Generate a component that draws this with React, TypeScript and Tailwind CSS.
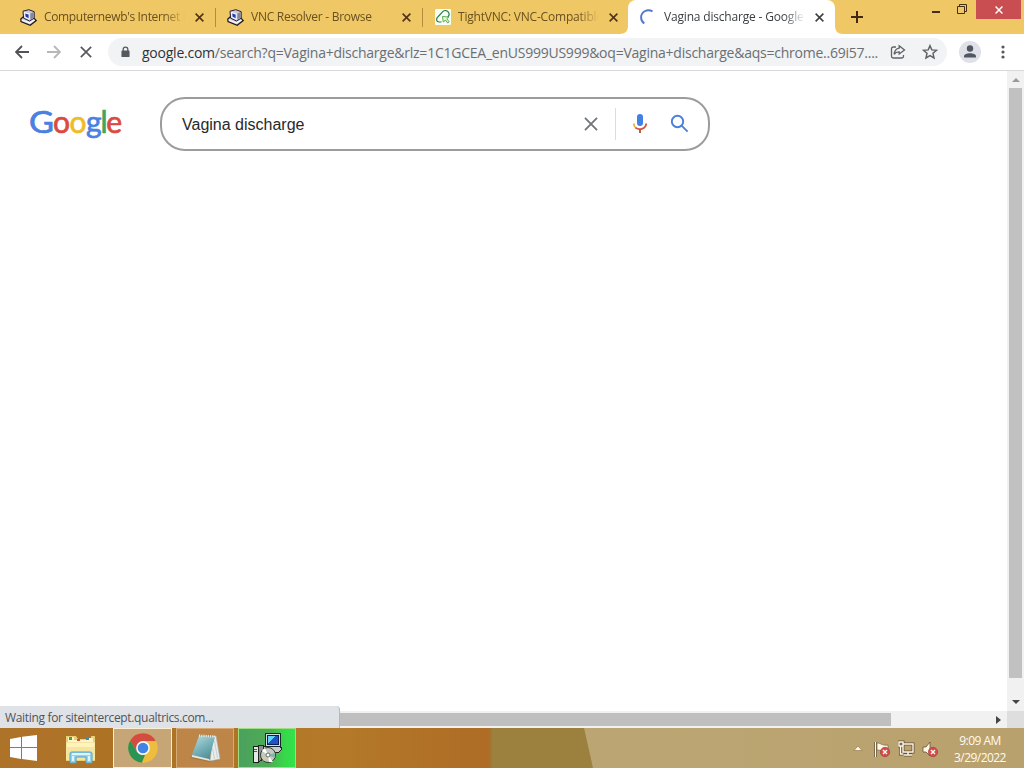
import type { ReactNode } from "react";

const UI_FONT = "font-['Open_Sans','Noto_Sans',sans-serif]";

function Cross({ className = "", size = 9, stroke = 1.7 }: { className?: string; size?: number; stroke?: number }) {
  return (
    <svg className={`shrink-0 ${className}`} width={size} height={size} viewBox="0 0 10 10" fill="none" stroke="currentColor" strokeWidth={stroke}>
      <path d="M.7.7l8.6 8.6M9.3.7L.7 9.3" />
    </svg>
  );
}

function VncIcon() {
  return (
    <svg width="17" height="17" viewBox="0 0 17 17" className="shrink-0">
      <path d="M.8 10l3-2.5 10 1.5 2.4 2.5-6 4.7L1 12.5z" fill="#d9d7dc" stroke="#1d1720" strokeWidth="1.2" />
      <path d="M2 11.2l7.5 2.6 5-2.8" fill="none" stroke="#f8f8fa" strokeWidth="1.2" />
      <path d="M3 2.2L8.8.7l5.4 2v6.5L9.5 12 3.6 9.2z" fill="#c9c8d3" stroke="#241e32" />
      <path d="M3.8 2.8l5.8 1.6v6.4L4.4 8.6z" fill="#f6f5fa" />
      <path d="M5.2 4.4l3.4 1v3.8L5.6 7.8z" fill="#2439b5" />
      <path d="M10.4 4.6l3-1.4v5.4l-3 2z" fill="#86849c" />
    </svg>
  );
}

function TightIcon() {
  return (
    <svg width="16" height="16" viewBox="0 0 16 16" className="shrink-0">
      <rect width="16" height="16" rx="1" fill="#f8fff5" />
      <path d="M6.5 13H4.2C1 13 .9 9.6 3 7.7l4.8-5c2-2 4.6-1.2 5.7.6 1.3 2.2.4 3.8-1 5" fill="none" stroke="#257d4e" strokeWidth="1.2" />
      <path d="M7.5 7.5l6 .6-1.6 1.7 2.2 3-1.4 1.2-2.2-3-2.2 2z" fill="#e9ffe0" stroke="#55ab49" />
    </svg>
  );
}

function Tab({ icon, title, active, className, titleClass }: { icon: ReactNode; title: string; active?: boolean; className: string; titleClass: string }) {
  return (
    <div className={`relative flex h-[34px] shrink-0 items-center ${className} ${active ? "rounded-t-lg bg-white text-[#3c4043]" : "text-[#69501f]"}`}>
      {icon}
      <div className={`ml-[7px] w-[141px] overflow-hidden whitespace-nowrap text-[12px] leading-[18px] [mask-image:linear-gradient(to_right,black_85%,transparent)] ${titleClass}`}>
        {title}
      </div>
      <Cross className={`ml-[10px] ${active ? "text-[#3c4043]" : "text-[#513017]"}`} />
    </div>
  );
}

function BrowserTabs() {
  return (
    <div className="flex h-[34px] items-start bg-[#efc765]">
      <Tab className="w-[215px] pl-[20px]" icon={<VncIcon />} title="Computernewb's Internet Ro" titleClass="tracking-[-0.34px]" />
      <div className="mt-2 h-[19px] w-px bg-[#b58b3d]" />
      <Tab className="w-[206px] pl-[11px]" icon={<VncIcon />} title="VNC Resolver - Browse" titleClass="tracking-[-0.27px]" />
      <div className="mt-2 h-[19px] w-px bg-[#b58b3d]" />
      <Tab className="w-[205px] pl-[12px]" icon={<TightIcon />} title="TightVNC: VNC-Compatible" titleClass="tracking-[-0.2px]" />
      <div className="relative h-[34px]">
        <Tab
          active
          className="w-[207px] pl-[12px]"
          icon={
            <svg width="17" height="17" viewBox="0 0 17 17" className="shrink-0" fill="none">
              <path d="M12.5 2.4C7-.8 1 3.1 1.1 8.5c0 2.6 1.3 4.7 3.2 6" stroke="#5278cd" strokeWidth="1.9" />
            </svg>
          }
          title="Vagina discharge - Google Search"
          titleClass="tracking-[-0.18px]"
        />
        <svg className="absolute -left-2 bottom-0" width="8" height="8"><path d="M8 0v8H0c5 0 8-3 8-8z" fill="white" /></svg>
        <svg className="absolute -right-2 bottom-0" width="8" height="8"><path d="M0 0v8h8C3 8 0 5 0 0z" fill="white" /></svg>
      </div>
      <svg className="ml-[16px] mt-[11px]" width="12" height="12" viewBox="0 0 12 12" stroke="#3f2b13" strokeWidth="2"><path d="M6 0v12M0 6h12" /></svg>
      <div className="ml-auto flex pr-[3px]">
        <div className="mr-[17px] mt-[11px] h-[2px] w-[8px] bg-[#453016]" />
        <svg className="mr-[9px] mt-[4px]" width="10" height="10" viewBox="0 0 10 10" fill="none" stroke="#453016">
          <path d="M.5 2.5h7v7h-7zM2.5 2V.5h7v7H8" />
        </svg>
        <div className="flex h-[19px] w-[45px] items-center justify-center bg-[#c94e52] text-white"><Cross size={8} stroke={1.8} /></div>
      </div>
    </div>
  );
}

function Toolbar() {
  return (
    <div className="flex h-[37px] items-center border-b border-[#d9d9dc] bg-white pl-[15px] text-[#5f6368]">
      <svg width="14" height="14" viewBox="0 0 14 14" fill="none" stroke="#505357" strokeWidth="1.8"><path d="M14 7H1.5M7 1L1 7l6 6" /></svg>
      <svg className="ml-[18px]" width="14" height="14" viewBox="0 0 14 14" fill="none" stroke="#b6b7b9" strokeWidth="1.8"><path d="M0 7h12.5M7 1l6 6-6 6" /></svg>
      <Cross className="ml-[19px] text-[#55585c]" size={12} stroke={1.4} />
      <div className="ml-[16px] flex h-[28px] w-[839px] items-center rounded-full bg-[#f1f3f4] pl-[13px]">
        <svg width="9" height="12" viewBox="0 0 10 12"><path d="M2.4 5V3.2a2.6 2.6 0 015.2 0V5" fill="none" stroke="#555a5e" strokeWidth="1.4" /><rect x=".5" y="4.4" width="9" height="7.2" rx="1" fill="#555a5e" /></svg>
        <div className="ml-[12px] w-[740px] whitespace-nowrap pt-px text-[14px] leading-5 tracking-[-0.24px] text-[#6b6f73]">
          <span className="text-[#303336]">google.com</span>/search?q=Vagina+discharge&amp;rlz=1C1GCEA_enUS999US999&amp;oq=Vagina+discharge&amp;aqs=chrome..69i57....
        </div>
        <svg className="ml-[8px] shrink-0" width="16" height="16" viewBox="0 0 16 16" fill="none" stroke="currentColor" strokeWidth="1.3">
          <path d="M6 3H3.2A1.7 1.7 0 001.5 4.7v7.6A1.7 1.7 0 003.2 14h8.6a1.7 1.7 0 001.7-1.7V11" />
          <path d="M9.2 1.8L14.5 6 9.2 10V7.9C7 7.8 5.3 8.6 4.2 10.4c.2-3.5 2-5.8 5-6.3z" />
        </svg>
        <svg className="ml-[16px] shrink-0" width="16" height="16" viewBox="0 0 16 16" fill="none" stroke="currentColor" strokeWidth="1.5"><path d="M8 1.7l1.8 4.2 4.7.4-3.5 3 1 4.6L8 11.5l-4 2.4 1-4.6-3.5-3 4.7-.4z" /></svg>
      </div>
      <svg className="ml-[12px]" width="22" height="22" viewBox="0 0 22 22"><circle cx="11" cy="11" r="11" fill="#dee1e8" /><circle cx="11" cy="7.5" r="3.2" fill="#51565f" /><path d="M5 16.5v-1.3c0-4 12-4 12 0v1.3z" fill="#51565f" /></svg>
      <svg className="ml-[20px]" width="4" height="14" fill="#55585c"><circle cx="2" cy="2" r="1.6" /><circle cx="2" cy="7" r="1.6" /><circle cx="2" cy="12" r="1.6" /></svg>
    </div>
  );
}

function GoogleLogo() {
  return (
    <svg className="mt-[34px] shrink-0" width="92" height="38" fontFamily="Lato, sans-serif" fontSize="30" strokeWidth=".7">
      <text x="-1" y="28" fontSize="31" fill="#4a80e2" stroke="#4a80e2" textLength="25" lengthAdjust="spacingAndGlyphs">G</text>
      <text x="23" y="28" fill="#db4a40" stroke="#db4a40">o</text>
      <text x="39.5" y="28" fill="#edbd28" stroke="#edbd28">o</text>
      <text x="56" y="28" fill="#4a80e2" stroke="#4a80e2">g</text>
      <text x="70.5" y="28" fill="#40a55b" stroke="#40a55b">l</text>
      <text x="76.3" y="28" fill="#db4a40" stroke="#db4a40">e</text>
    </svg>
  );
}

function SearchBox() {
  return (
    <div className="mt-[26px] flex h-[54px] w-[550px] items-center rounded-[25px] border-2 border-[#9c9c9c] bg-white pl-[20px]">
      <div className="w-[402px] pt-[2px] font-['Liberation_Sans',sans-serif] text-[16px] text-[#292929]">Vagina discharge</div>
      <Cross className="text-[#70757a]" size={14} stroke={1.3} />
      <div className="ml-[17px] h-[32px] w-px bg-[#dadce0]" />
      <svg className="ml-[16px]" width="16" height="22" viewBox="0 0 16 22" fill="none" strokeWidth="1.8">
        <rect x="5" y="1" width="6" height="12" rx="3" fill="#427fe6" />
        <path d="M1.7 10.5c.1 2 .9 3.5 2.1 4.4" stroke="#e7b532" />
        <path d="M3.5 14.6c3.4 3 10.4 1.5 10.7-4.1" stroke="#d95140" />
        <path d="M8 16.5V20" stroke="#a65436" />
      </svg>
      <svg className="ml-[22px]" width="20" height="20" viewBox="0 0 20 20" fill="none" stroke="#4a80d8" strokeWidth="1.9"><circle cx="7.5" cy="7.5" r="5.7" /><path d="M11.6 11.6l6 6" /></svg>
    </div>
  );
}

function Page() {
  return (
    <div className="relative flex h-[657px] bg-white">
      <div className="flex w-[1007px] flex-col">
        <div className="flex h-[640px] pl-[30px]">
          <GoogleLogo />
          <div className="ml-[38px]"><SearchBox /></div>
        </div>
        <div className="flex h-[17px] items-center bg-[#f1f1f1]">
          <div className="ml-[17px] h-[13px] w-[874px] bg-[#bfbfbf]" />
          <svg className="ml-auto mr-[6px]" width="5" height="8" fill="#454545"><path d="M0 0l5 4-5 4z" /></svg>
        </div>
      </div>
      <div className="flex w-[17px] flex-col items-center bg-[#f1f1f1]">
        <svg className="mt-[7px]" width="8" height="4" fill="#999"><path d="M0 4l4-4 4 4z" /></svg>
        <div className="mt-[6px] h-[590px] w-[13px] bg-[#c1c1c1]" />
        <svg className="mt-[22px]" width="8" height="4" fill="#454545"><path d="M0 0l4 4 4-4z" /></svg>
        <div className="mt-auto h-[17px] w-full bg-[#dedede]" />
      </div>
      <div className="absolute bottom-0 left-0 flex h-[22px] w-[340px] items-center rounded-tr border-r border-[#b5b6b9] bg-[#dfe2e6] pl-[5px] pt-[2px] text-[12px] tracking-[-0.33px] text-[#505458]">
        Waiting for siteintercept.qualtrics.com...
      </div>
    </div>
  );
}

function ExplorerIcon() {
  return (
    <svg width="34" height="32" viewBox="0 0 34 32">
      <path d="M2 5V2h10l2 3h13v-3h4v25H2z" fill="#e9ce73" />
      <path d="M4 3h6v3h15V4h4v5H4z" fill="#fff4c6" />
      <path d="M5 3h3v3H5z" fill="#41a14b" /><path d="M13 5h3v2h-3z" fill="#c8563d" /><path d="M22 4h3v2h-3z" fill="#388eb2" />
      <path d="M2 8h29v18H2z" fill="#f4e6a0" />
      <path d="M3 9h27v4H3z" fill="#fff3ba" />
      <path d="M6 29V20c0-2 1-2 3-2h16c2 0 3 0 3 2v9h-6v-6H12v6z" fill="#99d2e8" stroke="#559fc2" />
      <path d="M8 19h18v2H8zM8 22h2v5H8zM24 22h2v5h-2z" fill="#d7f6ff" />
    </svg>
  );
}

function ChromeIcon() {
  return (
    <svg width="30" height="30" viewBox="0 0 30 30">
      <circle cx="15" cy="15" r="14.7" fill="#eebd3e" />
      <path d="M15 15L8.8 18.5 2.2 7.5A14.7 14.7 0 0127.8 8H15z" fill="#d44b3f" />
      <path d="M2.2 7.5L8.8 18.6C10.6 21.5 13.5 22.5 17 22l-3.2 7.7A14.7 14.7 0 012.2 7.5z" fill="#299453" />
      <circle cx="15" cy="15" r="6.9" fill="#f6f8fb" /><circle cx="15" cy="15" r="5.3" fill="#4084e4" />
    </svg>
  );
}

function NotepadIcon() {
  return (
    <svg width="32" height="30" viewBox="0 0 32 30">
      <defs>
        <linearGradient id="pad" x1="0" y1="0" x2=".6" y2="1">
          <stop offset="0" stopColor="#b9dfe2" />
          <stop offset=".5" stopColor="#7fb7be" />
          <stop offset="1" stopColor="#4f929c" />
        </linearGradient>
      </defs>
      <path d="M1 25l19 4 10-2-4-10z" fill="#6b5634" opacity=".3" />
      <path d="M24 3l3 0 4 23-10 2z" fill="#e8ecec" stroke="#aab5b4" strokeWidth=".6" />
      <path d="M10 3l16 1-6 22-17-4z" fill="url(#pad)" />
      <path d="M3 22l17 4 1 2-18-4z" fill="#e5e8df" />
      <path d="M10 2.6l16 1" stroke="#e5eceb" strokeWidth="2.2" strokeDasharray="1.2 1" />
      <path d="M25.5 8l3 17M23.5 15l2 11" stroke="#bdcacc" strokeWidth=".8" />
    </svg>
  );
}

function InstallerIcon() {
  return (
    <svg width="32" height="32" viewBox="0 0 32 32" shapeRendering="crispEdges">
      <path d="M2 14h5v16H2z" fill="#e6e8e6" stroke="#191f1b" />
      <path d="M7 13h5v14l-4 3H7z" fill="#8c928f" stroke="#202621" />
      <path d="M3 17h3M3 19h3" stroke="#555" />
      <path d="M12 14h17l2 3-3 3H17" fill="#c9cccd" stroke="#222" />
      <path d="M14 1h15v13H14z" fill="#d5dde2" stroke="#15252b" />
      <path d="M16 3h11v9H16z" fill="#1d55c9" stroke="#0d1e55" /><path d="M17 4h7l-7 7z" fill="#65d1fa" />
      <g shapeRendering="auto"><circle cx="17" cy="23" r="7.5" fill="#c3c8c1" stroke="#333b35" />
        <path d="M17 23l-6-4a7 7 0 013-3z" fill="#fff" /><path d="M17 23l7-2v5z" fill="#83b8a5" /><path d="M17 23l-4 6-2-3z" fill="#d9c99c" /><path d="M17 23l1 7h4z" fill="#fff" />
        <circle cx="17" cy="23" r="2" fill="#f7fff7" stroke="#657068" /></g>
    </svg>
  );
}

function ErrorBadge() {
  return <g><circle cx="11" cy="11" r="4.7" fill="#d44b49" stroke="#993c36" strokeWidth=".6" /><path d="M9 9l4 4M13 9l-4 4" stroke="white" strokeWidth="1.4" /></g>;
}

function Taskbar() {
  return (
    <div className="relative flex h-[40px] bg-[linear-gradient(90deg,#ad7329_0px,#ae7225_110px,#b07426_240px,#b47a29_330px,#ae6c25_488px,#9c803d_494px,#9b783b_592px,#bba673_593px,#b9a16d_1024px)]">
      <svg className="absolute left-[490px] top-0" width="110" height="40"><path d="M2 0h92l9 40H2z" fill="#9c803e" /><path d="M94 0h16v40h-7z" fill="#bba673" /></svg>
      <div className="flex w-[48px] items-center pl-[10px]">
        <svg width="27" height="26" viewBox="0 0 27 26" fill="white"><path d="M0 4l11-2v10H0zM12 1.8L27 0v12H12zM0 13h11v11L0 22zM12 13h15v13l-15-2z" /></svg>
      </div>
      <div className="flex w-[65px] items-center pl-[16px] pt-[4px]"><ExplorerIcon /></div>
      <div className="flex h-[40px] w-[59px] items-center justify-center border border-[#faeed7] bg-[#c6a576]"><ChromeIcon /></div>
      <div className="ml-[4px] flex h-[40px] w-[58px] items-center justify-center border border-[#d7ab75] bg-[#bd8648]"><NotepadIcon /></div>
      <div className="ml-[4px] flex h-[40px] w-[58px] items-center justify-center border border-[#a0de84] bg-[linear-gradient(90deg,#4ba15d,#4dad55_55%,#38d64a_80%,#32e34b)]"><InstallerIcon /></div>
      <div className="ml-auto flex items-center text-[#fffaf0]">
        <svg width="10" height="6" viewBox="0 0 10 6"><path d="M1 5.5l4-4.5 4 4.5z" fill="#fff8eb" stroke="#897141" strokeWidth=".6" /></svg>
        <svg className="ml-[11px] mt-[2px]" width="17" height="17" viewBox="0 0 17 17"><path d="M1.5 1v15" stroke="#665332" strokeWidth="3" /><path d="M1.5 1v15" stroke="#fff8e9" strokeWidth="1.3" /><path d="M3 2c4 0 5 3 11 2v6c-5 1-7-1-11-1z" fill="#fff8e9" stroke="#776241" strokeWidth=".7" /><ErrorBadge /></svg>
        <svg className="ml-[7px]" width="17" height="17" viewBox="0 0 17 17" fill="none"><path d="M5 4h10v8H5zM10 12v3M6 15h8M2.5 6v8H5M1 2h4v4H1z" stroke="#67533a" strokeWidth="3" /><path d="M5 4h10v8H5zM10 12v3M6 15h8M2.5 6v8H5M1 2h4v4H1z" stroke="#fff8e9" strokeWidth="1.4" /></svg>
        <svg className="ml-[7px] mt-[2px]" width="17" height="17" viewBox="0 0 17 17"><path d="M1 6h3l4-5v14l-4-4H1z" fill="#fff8e9" stroke="#675237" strokeWidth=".8" /><ErrorBadge /></svg>
        <div className="ml-[12px] mr-[15px] w-[58px] pt-[2px] text-center text-[12px] leading-[17px] tracking-[-0.55px]">9:09 AM<br />3/29/2022</div>
      </div>
    </div>
  );
}

export default function App() {
  return (
    <div className={`h-[768px] w-[1024px] overflow-hidden bg-white ${UI_FONT}`}>
      <BrowserTabs />
      <Toolbar />
      <Page />
      <Taskbar />
    </div>
  );
}
